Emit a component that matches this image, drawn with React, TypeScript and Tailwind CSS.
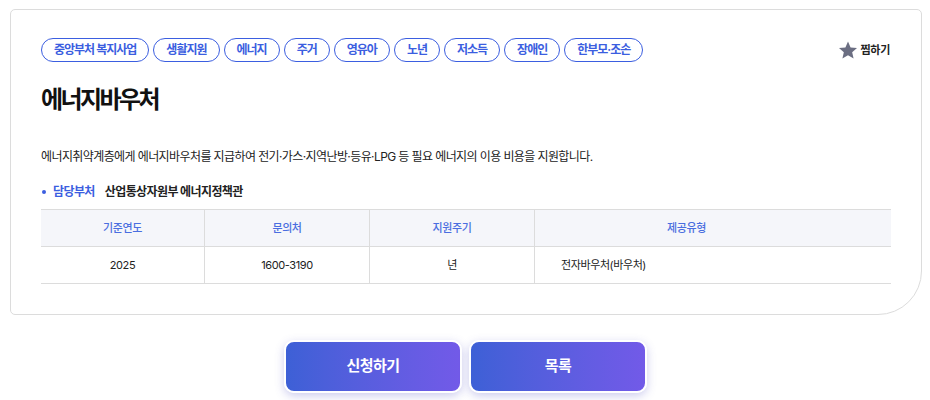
import React from "react";

const tags = ["중앙부처 복지사업", "생활지원", "에너지", "주거", "영유아", "노년", "저소득", "장애인", "한부모·조손"];

export default function App() {
  return (
    <div
      className="w-[930px] h-[400px] bg-white overflow-hidden"
      style={{ fontFamily: 'Inter, "Noto Sans CJK KR", "Noto Sans", sans-serif' }}
    >
      <div className="pt-[9px] pl-[10px] pr-[8px]">
        <div className="border border-[#dcdcdc] rounded-tl-[5px] rounded-tr-[5px] rounded-bl-[5px] rounded-br-[44px] px-[30px] pt-[28px] pb-[30px]">
          <div className="flex items-center justify-between">
            <div className="flex gap-[4px]">
              {tags.map((t) => (
                <span
                  key={t}
                  className="h-[24px] flex items-center px-[12px] rounded-full border border-[#3b5ee0] text-[#3b5ee0] text-[12px] font-semibold leading-none tracking-[-1px]"
                >
                  {t}
                </span>
              ))}
            </div>
            <div className="flex items-center gap-[3px] pr-[1px]">
              <svg width="20" height="20" viewBox="0 0 24 24">
                <path
                  d="M12 1.8l3.1 7.1 7.7.7-5.8 5.1 1.7 7.6L12 18.3l-6.7 4 1.7-7.6-5.8-5.1 7.7-.7z"
                  fill="#6b6e82"
                />
              </svg>
              <span className="text-[11px] font-bold text-[#222] tracking-[-0.3px]">찜하기</span>
            </div>
          </div>
          <h1 className="mt-[22px] text-[24px] font-bold text-[#111] leading-[32px] tracking-[-2.6px]">에너지바우처</h1>
          <p className="mt-[32px] text-[12px] text-[#222] leading-[18px] tracking-[-0.6px]">
            에너지취약계층에게 에너지바우처를 지급하여 전기·가스·지역난방·등유·LPG 등 필요 에너지의 이용 비용을 지원합니다.
          </p>
          <div className="mt-[17px] flex items-center text-[12px] leading-[18px] tracking-[-0.6px]">
            <span className="w-[4px] h-[4px] rounded-full bg-[#3b5ee0] ml-[1px]" />
            <span className="ml-[7px] text-[#3b5ee0] font-bold">담당부처</span>
            <span className="ml-[10px] text-[#222] font-bold">산업통상자원부 에너지정책관</span>
          </div>
          <div className="mt-[8px] border-t border-b border-[#dcdcdc] text-[11px] tracking-[-0.4px]">
            <div className="grid grid-cols-[164px_165px_165px_1fr] bg-[#f5f6fa] border-b border-[#dcdcdc] h-[37px] text-[#4a6ee0] font-medium">
              <div className="flex items-center justify-center border-r border-[#dcdcdc]">기준연도</div>
              <div className="flex items-center justify-center border-r border-[#dcdcdc]">문의처</div>
              <div className="flex items-center justify-center border-r border-[#dcdcdc]">지원주기</div>
              <div className="flex items-center justify-center pr-[53px]">제공유형</div>
            </div>
            <div className="grid grid-cols-[164px_165px_165px_1fr] h-[36px] text-[#222] font-normal">
              <div className="flex items-center justify-center border-r border-[#dcdcdc]">2025</div>
              <div className="flex items-center justify-center border-r border-[#dcdcdc]">1600-3190</div>
              <div className="flex items-center justify-center border-r border-[#dcdcdc]">년</div>
              <div className="flex items-center pl-[26px]">전자바우처(바우처)</div>
            </div>
          </div>
        </div>
      </div>
      <div className="mt-[25px] flex justify-center gap-[7px] pl-[1px]">
        <button className="w-[178px] h-[53px] rounded-[10px] border-2 border-white bg-gradient-to-r from-[#3d60d6] to-[#725ae8] text-white text-[15px] font-bold tracking-[-0.5px] shadow-[0_3px_10px_rgba(90,90,200,0.3)]">
          신청하기
        </button>
        <button className="w-[178px] h-[53px] rounded-[10px] border-2 border-white bg-gradient-to-r from-[#3d60d6] to-[#725ae8] text-white text-[15px] font-bold tracking-[-0.5px] shadow-[0_3px_10px_rgba(90,90,200,0.3)]">
          목록
        </button>
      </div>
    </div>
  );
}
